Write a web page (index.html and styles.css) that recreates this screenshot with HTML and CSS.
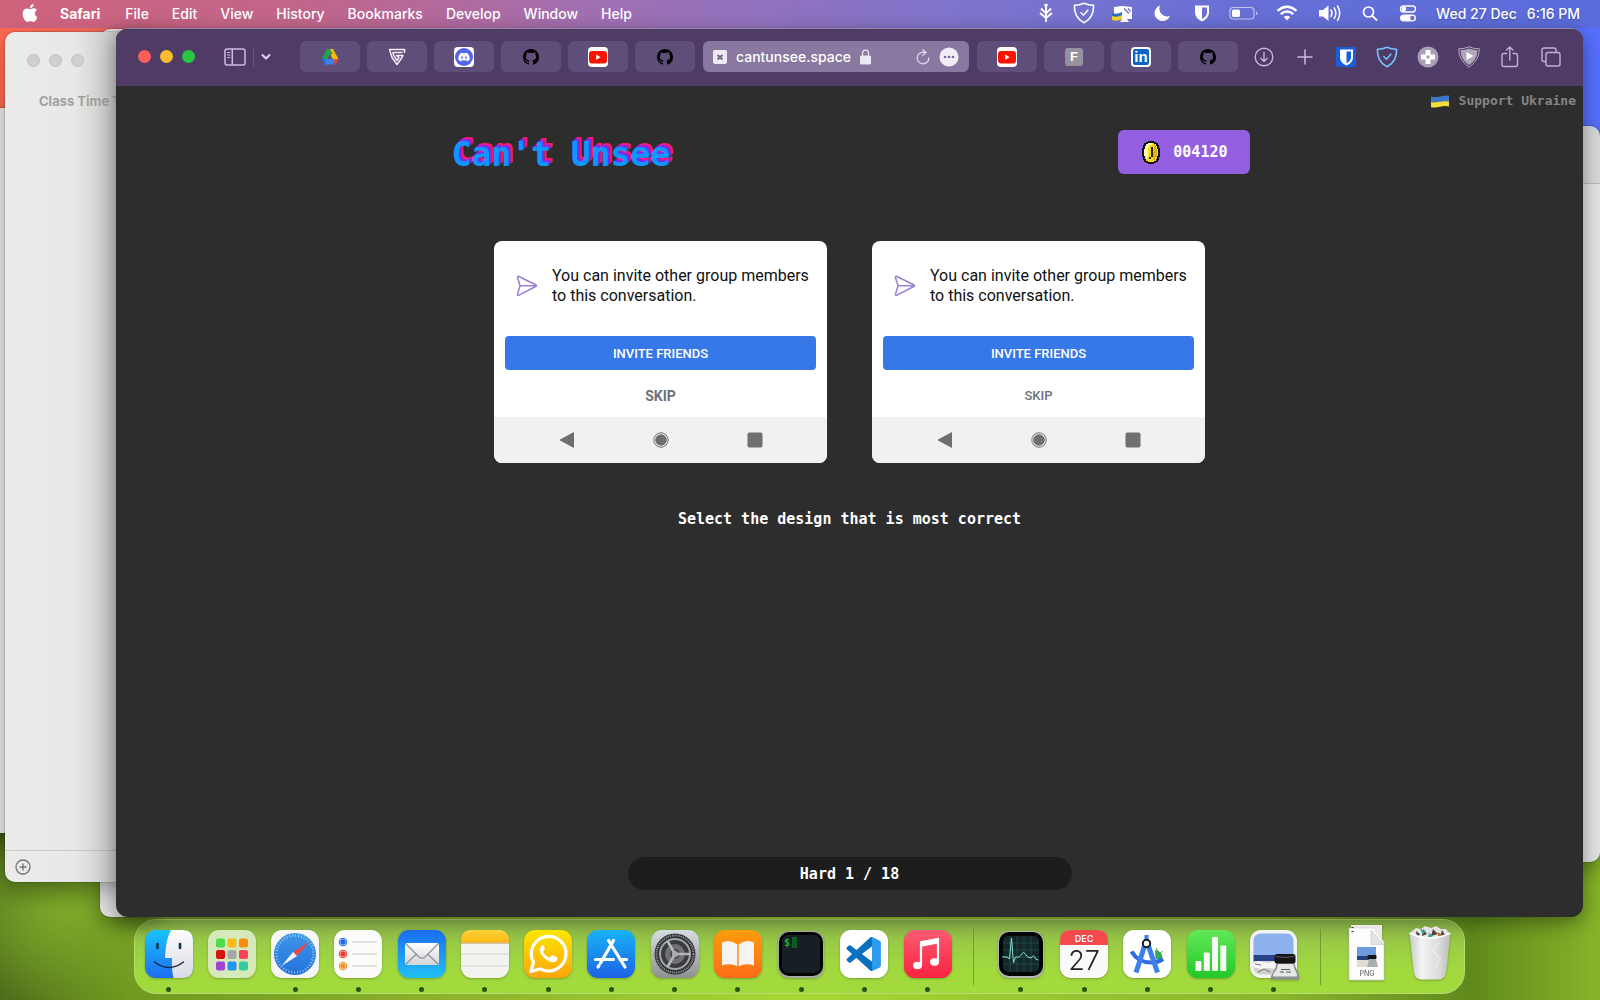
FILE: index.html
```html
<!DOCTYPE html>
<html lang="en">
<head>
<meta charset="utf-8">
<title>Can't Unsee</title>
<link rel="stylesheet" href="styles.css">
</head>
<body class="desktop">

<svg class="defs" width="0" height="0" aria-hidden="true">
  <defs>
    <linearGradient id="gBlue" x2="0" y2="1"><stop stop-color="#17c4fb"/><stop offset="1" stop-color="#1d6cf2"/></linearGradient>
    <linearGradient id="gPale" x2="0" y2="1"><stop stop-color="#fdfdfe"/><stop offset="1" stop-color="#d9dae4"/></linearGradient>
    <linearGradient id="gMail" x2="0" y2="1"><stop stop-color="#1a6df0"/><stop offset="1" stop-color="#21c0f5"/></linearGradient>
    <linearGradient id="gEnv" x2="0" y2="1"><stop stop-color="#fff"/><stop offset="1" stop-color="#d3d4d6"/></linearGradient>
    <linearGradient id="gNote" x2="0" y2="1"><stop stop-color="#ffd23a"/><stop offset="1" stop-color="#fdb813"/></linearGradient>
    <linearGradient id="gWa" x2="0" y2="1"><stop stop-color="#fbe600"/><stop offset="1" stop-color="#fda50c"/></linearGradient>
    <linearGradient id="gStore" x2="0" y2="1"><stop stop-color="#18b3f7"/><stop offset="1" stop-color="#1c62e6"/></linearGradient>
    <linearGradient id="gSet" x2="0" y2="1"><stop stop-color="#d5dde3"/><stop offset="1" stop-color="#8f9090"/></linearGradient>
    <linearGradient id="gBook" x2="0" y2="1"><stop stop-color="#fd9d0c"/><stop offset="1" stop-color="#fb6c17"/></linearGradient>
    <linearGradient id="gMusic" x2="0" y2="1"><stop stop-color="#fb5b73"/><stop offset="1" stop-color="#fa2340"/></linearGradient>
    <linearGradient id="gNum" x2="0" y2="1"><stop stop-color="#62e858"/><stop offset="1" stop-color="#23c829"/></linearGradient>
    <linearGradient id="gSaf" x2="0" y2="1"><stop stop-color="#3d97e8"/><stop offset="1" stop-color="#2471dc"/></linearGradient>
    <linearGradient id="gTrash" x2="1" y2="0"><stop stop-color="#c9ccc9"/><stop offset=".3" stop-color="#f2f3f2"/><stop offset=".7" stop-color="#dcdedc"/><stop offset="1" stop-color="#b9bdb9"/></linearGradient>
    <symbol id="github" viewBox="0 0 16 16"><path d="M8 0C3.58 0 0 3.58 0 8c0 3.54 2.29 6.53 5.47 7.59.4.07.55-.17.55-.38 0-.19-.01-.82-.01-1.49-2.01.37-2.53-.49-2.69-.94-.09-.23-.48-.94-.82-1.13-.28-.15-.68-.52-.01-.53.63-.01 1.08.58 1.23.82.72 1.21 1.87.87 2.33.66.07-.52.28-.87.51-1.07-1.78-.2-3.64-.89-3.64-3.95 0-.87.31-1.59.82-2.15-.08-.2-.36-1.02.08-2.12 0 0 .67-.21 2.2.82.64-.18 1.32-.27 2-.27.68 0 1.36.09 2 .27 1.53-1.04 2.2-.82 2.2-.82.44 1.1.16 1.92.08 2.12.51.56.82 1.27.82 2.15 0 3.07-1.87 3.75-3.65 3.95.29.25.54.73.54 1.48 0 1.07-.01 1.93-.01 2.2 0 .21.15.46.55.38A8.013 8.013 0 0016 8c0-4.42-3.58-8-8-8z"/></symbol>
    <symbol id="youtube" viewBox="0 0 20 20"><rect width="20" height="20" rx="4" fill="#fff"/><rect x="1" y="4" width="18" height="12.500" rx="3" fill="#fb1500"/><path d="M8.200 7.600v5.200l4.400-2.600z" fill="#fff"/></symbol>
    <symbol id="shield" viewBox="0 0 22 22"><path d="M11 1.200C14 2.600 17.500 3.200 20.600 3.200c.3 8-2.600 14-9.600 17.600C4 17.200 1.100 11.200 1.400 3.200 4.500 3.200 8 2.600 11 1.200z" fill="none" stroke="currentColor" stroke-width="1.600" stroke-linejoin="round"/><path d="M7.500 10.200l3 3 4.800-5.400" fill="none" stroke="currentColor" stroke-width="1.600"/></symbol>
    <symbol id="plane" viewBox="0 0 24 24"><path d="M3.200 1.600L21.500 10.600Q23 11.600 21.500 12.600L3.200 22Q1.300 22.600 1.700 20.600L4.400 11.700 1.700 3Q1.300 1 3.200 1.600zM4.400 11.700H22" fill="none" stroke="#9c80d8" stroke-width="1.700" stroke-linejoin="round"/></symbol>
  </defs>
</svg>

<header class="menubar">
  <nav class="menus" aria-label="Menu bar">
    <button class="menu apple" aria-label="Apple"><svg width="18" height="18" viewBox="0 0 24 24" fill="#fff"><path d="M12.152 6.896c-.948 0-2.415-1.078-3.960-1.040-2.040.027-3.910 1.183-4.961 3.014-2.117 3.675-.546 9.103 1.519 12.090 1.013 1.454 2.208 3.090 3.792 3.039 1.520-.065 2.090-.987 3.935-.987 1.831 0 2.350.987 3.960.948 1.637-.026 2.676-1.480 3.676-2.948 1.156-1.688 1.636-3.325 1.662-3.415-.039-.013-3.182-1.221-3.220-4.857-.026-3.040 2.480-4.494 2.597-4.559-1.429-2.090-3.623-2.324-4.390-2.376-2-.156-3.675 1.090-4.610 1.090zM15.530 3.830c.843-1.012 1.400-2.427 1.245-3.830-1.207.052-2.662.805-3.532 1.818-.780.896-1.454 2.338-1.273 3.714 1.338.104 2.715-.688 3.559-1.701"/></svg></button>
    <button class="menu app">Safari</button>
    <button class="menu">File</button>
    <button class="menu">Edit</button>
    <button class="menu">View</button>
    <button class="menu">History</button>
    <button class="menu">Bookmarks</button>
    <button class="menu">Develop</button>
    <button class="menu">Window</button>
    <button class="menu">Help</button>
  </nav>
  <div class="status">
    <svg class="st" viewBox="0 0 40 24"><path d="M20 3v18M15 7.500l5 5 5-5M14 12l6 5 6-5M20 3l-1.500 2M20 3l1.500 2" fill="none" stroke="#fff" stroke-width="1.900"/></svg>
    <svg class="st" viewBox="0 0 40 24" color="#fff"><use href="#shield" x="9" y="1" width="22" height="22"/></svg>
    <svg class="st" viewBox="0 0 40 24"><path d="M12 6l8-1 10 1v12h-5l2 3h-9l2-3H12z" fill="#fff"/><path d="M22 7.500l5 5M26 7.500l2.500 3" stroke="#6b6fd0" stroke-width="1.300"/><path d="M10 12q5 2 10-1v4q-5 3-10 1z" fill="#2d6fc4"/><path d="M10 15q5 2 10-1v4q-5 3-10 1z" fill="#f5d52a"/></svg>
    <svg class="st mid" viewBox="0 0 40 24"><path d="M18 4.500a8 8 0 1 0 10 10.500A8 8 0 0 1 18 4.500z" fill="#fff"/></svg>
    <svg class="st" viewBox="0 0 40 24"><path d="M13 4.500h14v7q0 5.500-7 9-7-3.500-7-9z" fill="#fff"/><path d="M20 6.500h5v5q0 3.700-5 6.500z" fill="#6f72d2"/></svg>
    <svg class="st wide" viewBox="0 0 40 24"><rect x="7" y="6.500" width="24" height="11.500" rx="3.500" fill="none" stroke="#fff" stroke-opacity=".6" stroke-width="1.200"/><rect x="9" y="8.500" width="8" height="7.500" rx="1.500" fill="#fff"/><path d="M33 10.500v3.500q1.500-.5 1.500-1.750T33 10.500z" fill="#fff" fill-opacity=".6"/></svg>
    <svg class="st wide" viewBox="0 0 40 24"><path d="M10.500 9.800q9.500-8 19 0M13.700 13.200q6.300-5.400 12.600 0" fill="none" stroke="#fff" stroke-width="2.400"/><path d="M20 19.500l-3.200-3.600q3.200-2.200 6.400 0z" fill="#fff"/></svg>
    <svg class="st mid" viewBox="0 0 40 24"><path d="M9 9h4l5.500-4.500v15.500L13 15.500H9z" fill="#fff"/><path d="M21 9q2 3.200 0 6.500M24.200 7q3.400 5.200 0 10.500M27.500 5q4.500 7.200 0 14.500" fill="none" stroke="#fff" stroke-width="1.500" stroke-linecap="round"/></svg>
    <svg class="st" viewBox="0 0 40 24"><circle cx="18.500" cy="11" r="5" fill="none" stroke="#fff" stroke-width="1.700"/><path d="M22.200 14.700l4.300 4.300" stroke="#fff" stroke-width="1.900" stroke-linecap="round"/></svg>
    <svg class="st" viewBox="0 0 40 24"><rect x="12.500" y="5" width="15" height="6" rx="3" fill="none" stroke="#fff" stroke-width="1.300"/><circle cx="16" cy="8" r="2.300" fill="#fff"/><rect x="12" y="13.500" width="16" height="7" rx="3.500" fill="#fff"/><circle cx="24.300" cy="17" r="2.200" fill="#6b70d4"/></svg>
    <time class="clock"><span>Wed 27 Dec</span><span>6:16 PM</span></time>
  </div>
</header>

<main class="space">
  <div class="back-window far-left"></div>
  <div class="back-window inner-left"></div>
  <div class="back-window far-right"></div>
  <section class="back-window notes-window" aria-label="Class Time Table">
    <div class="dim-lights"><i></i><i></i><i></i></div>
    <h2 class="notes-title">Class Time Table</h2>
    <footer class="notes-foot"><button class="plain" aria-label="Add"><svg width="16" height="16" viewBox="0 0 16 16" fill="none" stroke="#737373" stroke-width="1.300"><circle cx="8" cy="8" r="7"/><path d="M8 4.500v7M4.500 8h7"/></svg></button></footer>
  </section>

  <section class="safari" aria-label="Safari">
    <div class="toolbar">
      <div class="lights"><button class="light red" aria-label="Close"></button><button class="light yellow" aria-label="Minimize"></button><button class="light green" aria-label="Zoom"></button></div>
      <div class="side">
        <button class="plain" aria-label="Sidebar"><svg width="22" height="18" viewBox="0 0 22 18" fill="none" stroke="#d0b9ea" stroke-width="1.500"><rect x="1" y="1" width="20" height="16" rx="2"/><path d="M8.300 1v16"/><path d="M3.200 4.500h3M3.200 7h3M3.200 9.500h3" stroke-width="1.100"/></svg></button>
        <i class="rule"></i>
        <button class="plain" aria-label="Tab groups"><svg width="10" height="8" viewBox="0 0 10 8" fill="none" stroke="#e3d6f2" stroke-width="2" stroke-linecap="round" stroke-linejoin="round"><path d="M1.500 2L5 5.500 8.500 2"/></svg></button>
      </div>
      <div class="tabs">
        <button class="tab" aria-label="Drive"><svg width="18" height="16" viewBox="0 0 18 16"><path d="M6 0h3l1.500 3L4 15 .8 10z" fill="#25a04b"/><path d="M6 0h6l5.500 10h-6z" fill="#fcb70d"/><path d="M6 0h3l2.500 4.500L9 7z" fill="#25a04b"/><path d="M9 5.300L11.600 10H6.400z" fill="#614f7b"/><path d="M4.200 10h9.600L12.500 15.500H4z" fill="#3d83f0"/><path d="M.8 10h4L3.500 15.500 3 15z" fill="#2b65d6"/><path d="M13 10h4.500L14.500 15.500h-.8z" fill="#e8462f"/></svg></button>
        <button class="tab" aria-label="Shield site"><svg width="18" height="18" viewBox="0 0 18 18" fill="none" stroke="#f2eef8" stroke-width="1.500" stroke-linejoin="round"><path d="M16.500 5V1.500H1.500L4 9.500 9 16.500 14 9.500 15 7.500H8.500L11 9.500 9 12.500 5.500 7 5 4.500H14.500"/></svg></button>
        <button class="tab" aria-label="Discord"><svg width="20" height="20" viewBox="0 0 20 20"><rect width="20" height="20" rx="4" fill="#fff"/><circle cx="10" cy="10" r="9" fill="#5562ea"/><g transform="translate(4.300 4.400) scale(.475)"><path fill="#fff" d="M20.317 4.370a19.791 19.791 0 0 0-4.885-1.515.074.074 0 0 0-.079.037c-.210.375-.444.864-.608 1.250a18.270 18.270 0 0 0-5.487 0 12.640 12.640 0 0 0-.617-1.250.077.077 0 0 0-.079-.037A19.736 19.736 0 0 0 3.677 4.370C.533 9.046-.320 13.580.099 18.057a19.900 19.900 0 0 0 6.024 3.087c.462-.630.958-1.323 1.310-2.022a13.107 13.107 0 0 1-1.921-1.126l.449-.302c3.928 1.793 8.180 1.793 12.062 0l.451.302a12.299 12.299 0 0 1-1.920 1.126c.360.698.772 1.392 1.309 2.021a19.839 19.839 0 0 0 6.034-3.084c.5-5.177-.838-9.674-3.580-13.689zM8.020 15.330c-1.183 0-2.157-1.085-2.157-2.419 0-1.333.956-2.419 2.157-2.419 1.210 0 2.176 1.096 2.157 2.420 0 1.333-.956 2.418-2.157 2.418zm7.975 0c-1.183 0-2.157-1.085-2.157-2.419 0-1.333.955-2.419 2.157-2.419 1.210 0 2.176 1.096 2.157 2.420 0 1.333-.946 2.418-2.157 2.418z"/></g></svg></button>
        <button class="tab" aria-label="GitHub"><svg width="16" height="16"><use href="#github"/></svg></button>
        <button class="tab" aria-label="YouTube"><svg width="20" height="20"><use href="#youtube"/></svg></button>
        <button class="tab" aria-label="GitHub"><svg width="16" height="16"><use href="#github"/></svg></button>
        <div class="address">
          <svg width="14" height="14" viewBox="0 0 14 14"><rect width="14" height="14" rx="2" fill="#efebf5"/><path d="M4.500 5l5 4.500M9.500 5l-5 4.500" stroke="#75658f" stroke-width="2"/></svg>
          <input class="url" type="text" value="cantunsee.space" aria-label="Address">
          <svg width="11" height="16" viewBox="0 0 11 16"><rect y="6.500" width="11" height="9" rx="1.500" fill="#ece8f2"/><path d="M2.500 7V4.500a3 3.300 0 0 1 6 0V7" fill="none" stroke="#ece8f2" stroke-width="1.300"/></svg>
          <button class="plain reload" aria-label="Reload"><svg width="14" height="16" viewBox="0 0 14 16" fill="none" stroke="#ddd3ea" stroke-width="1.400" stroke-linecap="round" stroke-linejoin="round"><path d="M12.800 9A5.800 5.800 0 1 1 7.500 3.200L10 3.500M7 .8l3 2.700-3 2.700"/></svg></button>
          <button class="plain" aria-label="More"><svg width="20" height="20" viewBox="0 0 20 20"><circle cx="10" cy="10" r="9.500" fill="#f1edf6"/><g fill="#7b6a98"><circle cx="6" cy="10" r="1.300"/><circle cx="10" cy="10" r="1.300"/><circle cx="14" cy="10" r="1.300"/></g></svg></button>
        </div>
        <button class="tab" aria-label="YouTube"><svg width="20" height="20"><use href="#youtube"/></svg></button>
        <button class="tab" aria-label="F"><span class="fav fav-f">F</span></button>
        <button class="tab" aria-label="LinkedIn"><span class="fav fav-in">in</span></button>
        <button class="tab" aria-label="GitHub"><svg width="16" height="16"><use href="#github"/></svg></button>
      </div>
      <div class="tools">
        <button class="tool" aria-label="Downloads"><svg width="20" height="20" viewBox="0 0 20 20" fill="none" stroke="#c8b0e2" stroke-width="1.400" stroke-linecap="round" stroke-linejoin="round"><circle cx="10" cy="10" r="8.800"/><path d="M10 5.500v9M6.800 11.300L10 14.500l3.200-3.200"/></svg></button>
        <button class="tool" aria-label="New tab"><svg width="16" height="16" viewBox="0 0 16 16" stroke="#cdb8e6" stroke-width="1.500" stroke-linecap="round"><path d="M8 1v14M1 8h14"/></svg></button>
        <button class="tool" aria-label="Bitwarden"><svg width="20" height="20" viewBox="0 0 20 20"><rect width="20" height="20" rx="2" fill="#175ddc"/><path d="M4 2.500h13v8q0 5-6.500 8Q4 15.500 4 10.500z" fill="#fff"/><path d="M10.500 4.500h4.500v6q0 3.300-4.500 5.700z" fill="#175ddc"/></svg></button>
        <button class="tool blue" aria-label="AdGuard"><svg width="22" height="22"><use href="#shield"/></svg></button>
        <button class="tool" aria-label="Extension"><svg width="22" height="22" viewBox="0 0 22 22"><circle cx="11" cy="11" r="10.500" fill="#aa9fb6"/><path d="M8.500 4h5v4.500H18v5h-4.500V18h-5v-4.500H4v-5h4.500z" fill="#fff"/><circle cx="11" cy="11" r="1.800" fill="#aa9fb6"/></svg></button>
        <button class="tool" aria-label="Video extension"><svg width="22" height="22" viewBox="0 0 22 22"><path d="M11 .8q5 2.200 10.300 2 .2 11-10.300 18.500Q.5 13.800.7 2.800 6 3 11 .8z" fill="none" stroke="#b5a8c0"/><path d="M11 2.500q4.500 1.800 8.500 1.800-.2 9.500-8.500 15-8.300-5.500-8.500-15 4 0 8.500-1.800z" fill="#b1a8ba"/><path d="M8.500 6v8l7-4z" fill="#fff"/></svg></button>
        <button class="tool" aria-label="Share"><svg width="20" height="22" viewBox="0 0 20 22" fill="none" stroke="#c4acdf" stroke-width="1.400" stroke-linecap="round" stroke-linejoin="round"><path d="M6.500 7.500H4Q2 7.500 2 9.500v9q0 2 2 2h11.500q2 0 2-2v-9q0-2-2-2H13M9.800 14V1M6.600 4L9.800 1 13 4"/></svg></button>
        <button class="tool" aria-label="Tab overview"><svg width="22" height="20" viewBox="0 0 22 20" fill="none" stroke="#c4acdf" stroke-width="1.400"><rect x="6" y="5.500" width="14" height="13.500" rx="2"/><path d="M6 14.500H4q-2 0-2-2V3q0-2 2-2h10q2 0 2 2v2.500"/></svg></button>
      </div>
    </div>

    <div class="page">
      <a class="support" href="#"><svg width="18" height="13" viewBox="0 0 18 13"><path d="M0 1.500q5 1 9 0t9-1V7H0z" fill="#3f78c4"/><path d="M0 7q5 .5 9-.3t9-.3v5q-5-.8-9 .4t-9 .4z" fill="#f0dc3c"/></svg>Support Ukraine</a>
      <div class="game-head">
        <h1 class="logo">Can't Unsee</h1>
        <div class="score">
          <svg width="18" height="23" viewBox="0 0 18 23" shape-rendering="crispEdges"><path d="M6 0h6v1h2v1h2v2h1v3h1v9h-1v3h-1v2h-2v1h-2v1H6v-1H4v-1H2v-2H1v-3H0V7h1V4h1V2h2V1h2z" fill="#111"/><path d="M6 2h6v1h2v2h1v3h1v7h-1v3h-1v2h-2v1H6v-1H4v-2H3v-3H2V8h1V5h1V3h2z" fill="#f5de1c"/><path d="M6 2h4v2H7v2H6v10H5v2H4v-3H2V8h1V5h1V3h2z" fill="#fffbb0"/><path d="M12 3h1v2h1v3h1v8h-2v3h-2z" fill="#e0ac10"/><path d="M9 6h2v10H9v2H7v-2h2z" fill="#252008"/></svg>
          <span>004120</span>
        </div>
      </div>

      <div class="choices">
        <article class="card">
          <div class="message"><svg width="22" height="22"><use href="#plane"/></svg><p>You can invite other group members to this conversation.</p></div>
          <button class="invite">INVITE FRIENDS</button>
          <button class="skip strong">SKIP</button>
          <div class="android"><svg width="16" height="16" viewBox="0 0 16 16"><path d="M15 0v16L1 8.500v-1z" fill="#6f6f6f"/></svg><svg width="16" height="16" viewBox="0 0 16 16"><circle cx="8" cy="8" r="7.200" fill="none" stroke="#6f6f6f"/><circle cx="8" cy="8" r="5.800" fill="#6f6f6f"/></svg><svg width="16" height="16" viewBox="0 0 16 16"><rect x=".5" y=".5" width="15" height="15" rx="2" fill="#6f6f6f"/></svg></div>
        </article>
        <article class="card">
          <div class="message"><svg width="22" height="22"><use href="#plane"/></svg><p>You can invite other group members to this conversation.</p></div>
          <button class="invite">INVITE FRIENDS</button>
          <button class="skip">SKIP</button>
          <div class="android"><svg width="16" height="16" viewBox="0 0 16 16"><path d="M15 0v16L1 8.500v-1z" fill="#6f6f6f"/></svg><svg width="16" height="16" viewBox="0 0 16 16"><circle cx="8" cy="8" r="7.200" fill="none" stroke="#6f6f6f"/><circle cx="8" cy="8" r="5.800" fill="#6f6f6f"/></svg><svg width="16" height="16" viewBox="0 0 16 16"><rect x=".5" y=".5" width="15" height="15" rx="2" fill="#6f6f6f"/></svg></div>
        </article>
      </div>
      <p class="prompt">Select the design that is most correct</p>
      <div class="progress">Hard 1 / 18</div>
    </div>
  </section>
</main>

<nav class="dock" aria-label="Dock">
  <button class="slot open" aria-label="Finder"><svg viewBox="0 0 48 48"><rect width="48" height="48" rx="11" fill="url(#gBlue)"/><path d="M26 0h11q11 0 11 11v26q0 11-11 11h-8.500q-2-8-1.500-20h-7Q20.500 10 26 0z" fill="url(#gPale)"/><path d="M12.500 14v4M35 14v4" stroke="#12324f" stroke-width="2.600" stroke-linecap="round"/><path d="M9.500 32q14.500 11 29 0" fill="none" stroke="#172b3f" stroke-width="1.500" stroke-linecap="round"/></svg></button>
  <button class="slot" aria-label="Launchpad"><svg viewBox="0 0 48 48"><rect width="48" height="48" rx="11" fill="#d6e9bb"/><rect x="8" y="8.500" width="9" height="9" rx="2" fill="#4bdc49"/><rect x="19.500" y="8.500" width="9" height="9" rx="2" fill="#fdbb16"/><rect x="31" y="8.500" width="9" height="9" rx="2" fill="#fb8a0d"/><rect x="8" y="20" width="9" height="9" rx="2" fill="#d8130f"/><rect x="19.500" y="20" width="9" height="9" rx="2" fill="#a3a9a9"/><rect x="31" y="20" width="9" height="9" rx="2" fill="#f94459"/><rect x="8" y="31.500" width="9" height="9" rx="2" fill="#a042d3"/><rect x="19.500" y="31.500" width="9" height="9" rx="2" fill="#1d96f5"/><rect x="31" y="31.500" width="9" height="9" rx="2" fill="#35cba0"/></svg></button>
  <button class="slot open" aria-label="Safari"><svg viewBox="0 0 48 48"><rect width="48" height="48" rx="11" fill="#f6f6f6"/><circle cx="24" cy="24" r="21" fill="url(#gSaf)"/><circle cx="24" cy="24" r="18.500" fill="none" stroke="#b9dcfa" stroke-width="2.500" stroke-dasharray=".7 2.200"/><path d="M38.500 11.500L22 22l4 4z" fill="#ef4a42"/><path d="M10.500 36L22 22l4 4z" fill="#f4f6f8"/></svg></button>
  <button class="slot open" aria-label="Reminders"><svg viewBox="0 0 48 48"><rect width="48" height="48" rx="11" fill="#fbfbfa"/><g fill="none" stroke-width="1"><circle cx="9" cy="12" r="3.800" stroke="#1c69e5"/><circle cx="9" cy="24" r="3.800" stroke="#e83c33"/><circle cx="9" cy="36" r="3.800" stroke="#f09029"/></g><circle cx="9" cy="12" r="2.700" fill="#1c69e5"/><circle cx="9" cy="24" r="2.700" fill="#e83c33"/><circle cx="9" cy="36" r="2.700" fill="#f09029"/><path d="M18 12h25M18 24h25M18 36h25" stroke="#c2c3c4" stroke-width="1"/></svg></button>
  <button class="slot open" aria-label="Mail"><svg viewBox="0 0 48 48"><rect width="48" height="48" rx="11" fill="url(#gMail)"/><rect x="7" y="13" width="34" height="22" rx="2.500" fill="url(#gEnv)"/><path d="M8 14l13 13q3 2.500 6 0l13-13M8 34l10.500-10M40 34L29.500 24" fill="none" stroke="#888d92" stroke-width="1.100"/></svg></button>
  <button class="slot open" aria-label="Notes"><svg viewBox="0 0 48 48"><rect width="48" height="48" rx="11" fill="#f3f3ef"/><path d="M0 12.500V11Q0 0 11 0h26q11 0 11 11v1.500z" fill="url(#gNote)"/><path d="M0 13h48" stroke="#c79b44" stroke-width="1"/><path d="M0 24h48M0 36h48" stroke="#d6d6d2"/></svg></button>
  <button class="slot open" aria-label="WhatsApp"><svg viewBox="0 0 48 48"><rect width="48" height="48" rx="11" fill="url(#gWa)"/><path d="M7 41.500l2.500-9.500a17.300 17.300 0 1 1 6.800 6.800z" fill="none" stroke="#fff" stroke-width="3.200" stroke-linejoin="round"/><path d="M18 15.500q-2.500 1.500-2.300 4.500 1.300 8.500 11.800 12.200 4.500.8 6-3.200.2-1.200-.8-1.800l-3.700-1.900q-1-.4-1.700.5l-1.600 1.900q-4.500-1.700-6.700-6l1.500-2q.4-.7.2-1.500l-1.300-3q-.5-.8-1.400.3z" fill="#fff"/></svg></button>
  <button class="slot open" aria-label="App Store"><svg viewBox="0 0 48 48"><rect width="48" height="48" rx="11" fill="url(#gStore)"/><path d="M26.500 10.500L13.500 33M21.500 10.500L38 37M8.500 29.500h18M33 29.500h6.500M12 35.500l-1 1.500" stroke="#fff" stroke-width="3.200" stroke-linecap="round"/></svg></button>
  <button class="slot open" aria-label="System Settings"><svg viewBox="0 0 48 48"><rect width="48" height="48" rx="11" fill="url(#gSet)"/><circle cx="24" cy="24" r="20.500" fill="#2e3033"/><circle cx="24" cy="24" r="18.500" fill="none" stroke="#919496" stroke-width="2" stroke-dasharray="1.200 1"/><circle cx="24" cy="24" r="15" fill="#3a3c3f" stroke="#a4a6a8" stroke-width="2"/><circle cx="24" cy="24" r="10" fill="#707274"/><circle cx="24" cy="24" r="5" fill="#47494b"/><path d="M24 24l15 0M24 24L16.500 11M24 24l-7.500 13" stroke="#b4b6b7" stroke-width="2.600"/><circle cx="24" cy="24" r="3" fill="#a9abad"/></svg></button>
  <button class="slot open" aria-label="Books"><svg viewBox="0 0 48 48"><rect width="48" height="48" rx="11" fill="url(#gBook)"/><path d="M23.300 14.500Q16 8.500 8 12.500V35.500q8-3 15.300.8zM24.700 14.500Q32 8.500 40 12.500V35.500q-8-3-15.300.8z" fill="#f6f4f2"/></svg></button>
  <button class="slot open" aria-label="Terminal"><svg viewBox="0 0 48 48"><rect x="1" y="1" width="46" height="47" rx="11" fill="#a5aaa2"/><rect x="2" y="2" width="44" height="44" rx="10" fill="#020203"/><rect x="5" y="5" width="38" height="38" rx="6" fill="#162024"/><text x="7" y="16" class="term">$</text><rect x="15" y="7" width="5" height="11" fill="#0c5c22"/></svg></button>
  <button class="slot open" aria-label="Visual Studio Code"><svg viewBox="0 0 48 48"><rect width="48" height="48" rx="11" fill="#fff"/><g transform="translate(6.500 7) scale(1.420)"><path fill="#0a70c0" d="M23.150 2.587L18.210.210a1.494 1.494 0 0 0-1.705.290l-9.460 8.630-4.120-3.128a.999.999 0 0 0-1.276.057L.327 7.261A1 1 0 0 0 .326 8.740L3.899 12 .326 15.260a1 1 0 0 0 .001 1.479L1.650 17.940a.999.999 0 0 0 1.276.057l4.120-3.128 9.460 8.630a1.492 1.492 0 0 0 1.704.290l4.942-2.377A1.500 1.500 0 0 0 24 20.060V3.939a1.500 1.500 0 0 0-.850-1.352zm-5.146 14.861L10.826 12l7.178-5.448v10.896z"/><path fill="#2c9cee" d="M18 .1l5.150 2.487A1.500 1.500 0 0 1 24 3.939V20.060a1.500 1.500 0 0 1-.850 1.352L18 23.900z"/></g></svg></button>
  <button class="slot open" aria-label="Music"><svg viewBox="0 0 48 48"><rect width="48" height="48" rx="11" fill="url(#gMusic)"/><path d="M17 35V12.500L34 9v22" fill="none" stroke="#fff" stroke-width="2.200"/><path d="M16 11.500L35 7.800v5.400L16 17z" fill="#fff"/><ellipse cx="13.500" cy="35.500" rx="4.500" ry="3.700" fill="#fff"/><ellipse cx="30.500" cy="32" rx="4.500" ry="3.700" fill="#fff"/></svg></button>
  <i class="split"></i>
  <button class="slot open" aria-label="Activity Monitor"><svg viewBox="0 0 48 48"><rect x="1" y="1" width="46" height="47" rx="11" fill="#b4b8b4"/><rect x="2" y="2" width="44" height="44" rx="10" fill="#030404"/><rect x="6" y="6" width="36" height="36" rx="5" fill="#13282a"/><path d="M13 6v36M20 6v36M27 6v36M34 6v36M6 13h36M6 20h36M6 27h36M6 34h36" stroke="#29504c" stroke-width=".7"/><path d="M5 27h5l2.500 2L14.500 8l2 25 2-6q5 1 6-3 2-3 4 0 1 4 6 4 2-5 4 1l3 1" fill="none" stroke="#86e5c8" stroke-width="1"/></svg></button>
  <button class="slot open" aria-label="Calendar"><svg viewBox="0 0 48 48"><rect width="48" height="48" rx="11" fill="#fafafa"/><path d="M0 15V11Q0 0 11 0h26q11 0 11 11v4z" fill="#f5494c"/><text x="24" y="11.500" class="cal-month">DEC</text><text x="24" y="40" class="cal-day">27</text></svg></button>
  <button class="slot open" aria-label="Android Studio"><svg viewBox="0 0 48 48"><rect width="48" height="48" rx="11" fill="#fff"/><path d="M32 20q8 1 7.500 9h-7z" fill="#36a852"/><path d="M33 18l1.500 3M39.500 21l-2 2" stroke="#36a852"/><path d="M8.500 21.500q6.500 11 19.500 11 7 0 12-3.500" fill="none" stroke="#2f6ce0" stroke-width="4"/><path d="M21.500 16L13 42.500M25.500 16L34.500 42.500" stroke="#3c7ff0" stroke-width="5"/><path d="M21.500 5h4v6h-4z" fill="#3c7ff0"/><circle cx="23.500" cy="13.500" r="3.700" fill="#fff" stroke="#15171a" stroke-width="2"/></svg></button>
  <button class="slot open" aria-label="Numbers"><svg viewBox="0 0 48 48"><rect width="48" height="48" rx="11" fill="url(#gNum)"/><g fill="#f5fbf4"><rect x="8.500" y="31" width="6" height="10" rx="1"/><rect x="16.800" y="22.500" width="6" height="18.500" rx="1"/><rect x="25" y="7" width="6" height="34" rx="1"/><rect x="33.300" y="15.500" width="6" height="25.500" rx="1"/></g></svg></button>
  <button class="slot open" aria-label="Preview"><svg viewBox="0 0 48 48"><rect width="47" height="48" rx="11" fill="#f2f3f3"/><clipPath id="pv"><rect x="3.500" y="3.500" width="40" height="41" rx="7"/></clipPath><g clip-path="url(#pv)"><rect width="48" height="26" fill="#8db0ee"/><rect y="25" width="48" height="7" fill="#28428a"/><rect y="31" width="48" height="17" fill="#cfd0cc"/><path d="M3 33l6-2 8 2 10-2v8l-9-1-8 1-7-2z" fill="#f5f7f8"/><path d="M8 42l6-3 6 3M5 34l6 1" stroke="#77736e" stroke-width="1" fill="none"/></g><path d="M26.500 32h17.500q1 5 4 10 2 4 1 7.500H20.500q0-4 3-8 2.500-4 3-9.500z" fill="#8d9193"/><path d="M28 34h15q1 5 3.500 9 1 2 .5 3.500H23q0-3 2.500-5.500 2-3 2.500-7z" fill="#e6e8e8"/><rect x="24.500" y="24" width="21" height="9.500" rx="2.500" fill="#141416"/><path d="M25.500 26.500q9.500 2 19 0" stroke="#5a5c5e" fill="none"/><path d="M30 42h4M36 42h5M31 39.500h9" stroke="#55585a" stroke-width="1.200"/></svg></button>
  <i class="split"></i>
  <button class="slot" aria-label="PNG files"><svg viewBox="0 0 48 48"><path d="M8-5h31V38H8z" fill="#e9eae9"/><path d="M6-2h24L41 12V50H6z" fill="#fdfdfd" stroke="#cfd2cb" stroke-width=".6"/><path d="M28 0v14.500h13z" fill="#e2e4e3" stroke="#c6c8c6" stroke-width=".6"/><path d="M8.500-3h2v1h-2zM8.500 1h2v1h-2z" fill="#222"/><rect x="14" y="17" width="19" height="11" fill="#6d9be0"/><rect x="14" y="26" width="19" height="4" fill="#26407e"/><rect x="14" y="30" width="19" height="7" fill="#e2ddd2"/><path d="M26 29h7l2 8H24z" fill="#a9adaf"/><rect x="24.500" y="25" width="9" height="4" rx="1" fill="#141416"/><text x="24" y="46" class="png">PNG</text></svg></button>
  <button class="slot" aria-label="Trash"><svg viewBox="0 0 48 48"><path d="M5 2l5-4 5 1 4-3 6 2 5-2 5 3 5 0 3 4v7H5z" fill="#e4e5e2"/><path d="M10 1l4 3-3 4zM17-1l4 5-5 2zM27-1l5 5-7 2zM36 0l-2 7 5-2z" fill="#4d4540"/><path d="M14-1l6 2-3 3zM23 3l4 3-5 2z" fill="#35a08c"/><path d="M32 2l4 3-4 2z" fill="#b86b33"/><path d="M3.500 3Q24 13 44.500 3L40 43q-1 6-8 6.500H16Q9 49 8 43z" fill="url(#gTrash)"/><path d="M3.500 3Q24 13 44.500 3" fill="none" stroke="#fff" stroke-width="1.500"/><path d="M13 13l5 8-4 8 6 9M33 12l-6 9 7 8-5 10" fill="none" stroke="#f7f8f7" stroke-width="2" stroke-opacity=".4"/></svg></button>
</nav>
</body>
</html>
```

FILE: styles.css
```css
* { box-sizing: border-box; }

button { border: 0; padding: 0; margin: 0; background: none; font: inherit; color: inherit; }
h1, h2, p { margin: 0; }
svg { display: block; flex: none; }
.defs { position: absolute; }

.desktop {
  margin: 0;
  min-height: 100vh;
  display: flex;
  flex-direction: column;
  font-family: Inter, "Liberation Sans", sans-serif;
  background:
    radial-gradient(ellipse 150px 90px at 70px 915px, #7ca82a, transparent),
    linear-gradient(90deg, #ff6a52 0, #d0608a 30%, #6a6fe0 70%, #5570ff 100%) top / 100% 200px no-repeat,
    linear-gradient(90deg, #4d6c1b 0, #70991f 8%, #8fb52c 30%, #a6d834 50%, #8ab42c 80%, #5f8a1c 92%, #86b428 100%);
}

/* Menu bar */
.menubar {
  height: 28px;
  display: flex;
  justify-content: space-between;
  padding: 0 20px 2px 21px;
  color: #fff;
  font-size: 14px;
  font-weight: 500;
  text-shadow: 0 1px 2px rgba(0, 0, 0, .25);
  background: linear-gradient(90deg, #cf637c 0, #c0668c 20%, #9f70b4 38%, #7f74cc 60%, #656fd6 80%, #5a6cdc 100%);
}
.menus { display: flex; align-items: center; gap: 23px; }
.apple { margin-right: -2px; }
.app { margin-right: 2px; font-weight: 700; }
.status { display: flex; align-items: center; }
.st { width: 40px; height: 24px; margin: 0 -1px; }
.mid { margin: 0 1px; }
.wide { margin: 0 2px; }
.clock { display: flex; gap: 10px; margin-left: 9px; }

/* Windows behind the browser */
.space { flex: 1; display: flex; position: relative; margin-bottom: 2px; }
.back-window { position: absolute; background: #e9e9e8; border-radius: 10px; box-shadow: 0 0 0 1px rgba(0, 0, 0, .12), 0 8px 20px rgba(0, 0, 0, .3); }
.far-left { left: -20px; width: 60px; top: 80px; bottom: 84px; }
.inner-left { left: 100px; width: 60px; top: 1px; bottom: 0; background: #e0e0e2; }
.far-right { right: 0; width: 60px; top: 98px; bottom: 55px; background: linear-gradient(#d9d9dc 57px, #bbb 57px, #bbb 58px, #e4e4e6 58px); }
.notes-window {
  left: 5px;
  width: 200px;
  top: 4px;
  bottom: 35px;
  display: flex;
  flex-direction: column;
  background: linear-gradient(90deg, #ebebea 0, #e8e8e7 70px, #c4c4c3 111px);
}
.dim-lights { display: flex; gap: 9px; padding: 22px 0 0 22px; }
.dim-lights i { width: 13px; height: 13px; border-radius: 50%; background: #cfcfce; border: 1px solid #c0c0bf; }
.notes-title { padding: 26px 0 0 34px; font-size: 13px; line-height: 16px; font-weight: 700; color: #a0a09f; white-space: nowrap; }
.notes-foot { margin-top: auto; height: 32px; padding: 8px 10px; border-top: 1px solid rgba(0, 0, 0, .12); }

/* Browser */
.safari {
  position: relative;
  flex: 1;
  min-width: 0;
  margin: 0 17px 0 116px;
  display: flex;
  flex-direction: column;
  border-radius: 12px;
  border-top: 1px solid #93829f;
  overflow: hidden;
  background: #2d2d2d;
  box-shadow: 0 6px 20px rgba(0, 0, 0, .4);
}
.toolbar { height: 57px; display: flex; align-items: center; padding: 0 12px 2px 22px; background: #4e3c67; }
.lights { display: flex; gap: 9px; margin-right: 29px; }
.light { width: 13px; height: 13px; border-radius: 50%; }
.red { background: #fb5e59; }
.yellow { background: #fcbc2f; }
.green { background: #27c83f; }
.side { display: flex; align-items: center; gap: 7px; margin-right: 29px; }
.rule { width: 1px; height: 20px; background: #66567f; }
.tabs { flex: 1; display: flex; gap: 7px; min-width: 0; }
.tab { flex: 1 1 60px; height: 31px; display: flex; align-items: center; justify-content: center; border-radius: 6px; background: #5f4e79; }
.fav { display: flex; align-items: center; justify-content: center; color: #fff; font-family: "Liberation Sans", sans-serif; font-weight: 700; }
.fav-f { width: 18px; height: 18px; border-radius: 3px; background: #96919f; font-size: 13px; }
.fav-in { width: 20px; height: 20px; border: 2px solid #fff; border-radius: 4px; background: #0a66c2; font-size: 15px; line-height: 14px; }
.address { flex: 4 0 266px; height: 31px; display: flex; align-items: center; gap: 9px; padding: 0 10px; margin: 0 1px; border-radius: 6px; background: #89789f; }
.url { width: 115px; padding: 0; border: 0; background: none; color: #fff; font: 500 14px Inter, sans-serif; }
.reload { margin-left: auto; }
.tools { display: flex; margin-left: 5px; }
.tool { width: 41px; height: 31px; display: flex; align-items: center; justify-content: center; }
.blue { color: #78c4ff; }

/* Game page */
.page { flex: 1; display: flex; flex-direction: column; align-items: center; font-family: "DejaVu Sans Mono", monospace; font-weight: 700; color: #fff; }
.support { align-self: flex-end; display: flex; align-items: center; gap: 10px; padding: 7px 7px 0 0; font-size: 13px; line-height: 16px; color: #858585; text-decoration: none; }
.game-head { width: 100%; max-width: 800px; display: flex; align-items: center; justify-content: space-between; padding: 21px 0 0 2px; }
.logo {
  padding-top: 6px;
  font-size: 33px;
  line-height: 38px;
  color: #0c97ff;
  text-shadow: 1px -1px #7b2cf5, 2px -2px #7b2cf5, 3px -3px #f8177c, 4px -4px #f8177c;
}
.score { height: 44px; display: flex; align-items: center; gap: 13px; padding: 0 22px 0 24px; border-radius: 6px; background: #935ee0; font-size: 15px; }
.choices { display: flex; gap: 45px; margin-top: 67px; }
.card { width: 333px; display: flex; flex-direction: column; border-radius: 8px; overflow: hidden; background: #fff; font-family: Roboto, sans-serif; font-weight: 400; color: #111; }
.message { display: flex; align-items: center; gap: 14px; padding: 25px 16px 0 22px; font-size: 16px; line-height: 20px; }
.invite { height: 34px; margin: 30px 11px 0; border-radius: 4px; background: #3678e7; color: #fff; font-size: 13px; font-weight: 500; }
.skip { height: 47px; padding-top: 4px; color: #6a7178; font-size: 13px; font-weight: 500; }
.strong { font-size: 14px; font-weight: 700; }
.android { height: 46px; display: flex; align-items: center; justify-content: center; gap: 78px; background: #f1f1f1; }
.prompt { margin-top: 45px; font-size: 15px; line-height: 22px; }
.progress { width: 444px; height: 33px; margin: auto 0 27px; border-radius: 17px; background: #1d1d1d; font-size: 15px; line-height: 34px; text-align: center; }

/* Dock */
.dock {
  height: 75px;
  display: flex;
  margin: 0 135px 6px 134px;
  padding: 0 2px;
  border-radius: 22px;
  border: 1px solid #b3dd72;
  background: linear-gradient(#93bf4e, #a2da3e 70%);
}
.slot { flex: 1; display: flex; flex-direction: column; align-items: center; padding-top: 10px; }
.slot svg { width: 48px; height: 48px; overflow: visible; filter: drop-shadow(0 1px 1px rgba(0, 0, 0, .25)); }
.open::after { content: ""; width: 5px; height: 5px; margin-top: 9px; border-radius: 50%; background: #2d5210; }
.split { width: 1px; height: 56px; margin: 9px 15px 0 14px; background: #739f35; }
.term { font: 700 10px "DejaVu Sans Mono", monospace; fill: #18b52c; }
.cal-month { font: 600 9px Inter, sans-serif; fill: #fff; text-anchor: middle; }
.cal-day { font: 300 27px Inter, sans-serif; fill: #222; text-anchor: middle; }
.png { font: 400 7px Inter, sans-serif; fill: #555; text-anchor: middle; }
```
